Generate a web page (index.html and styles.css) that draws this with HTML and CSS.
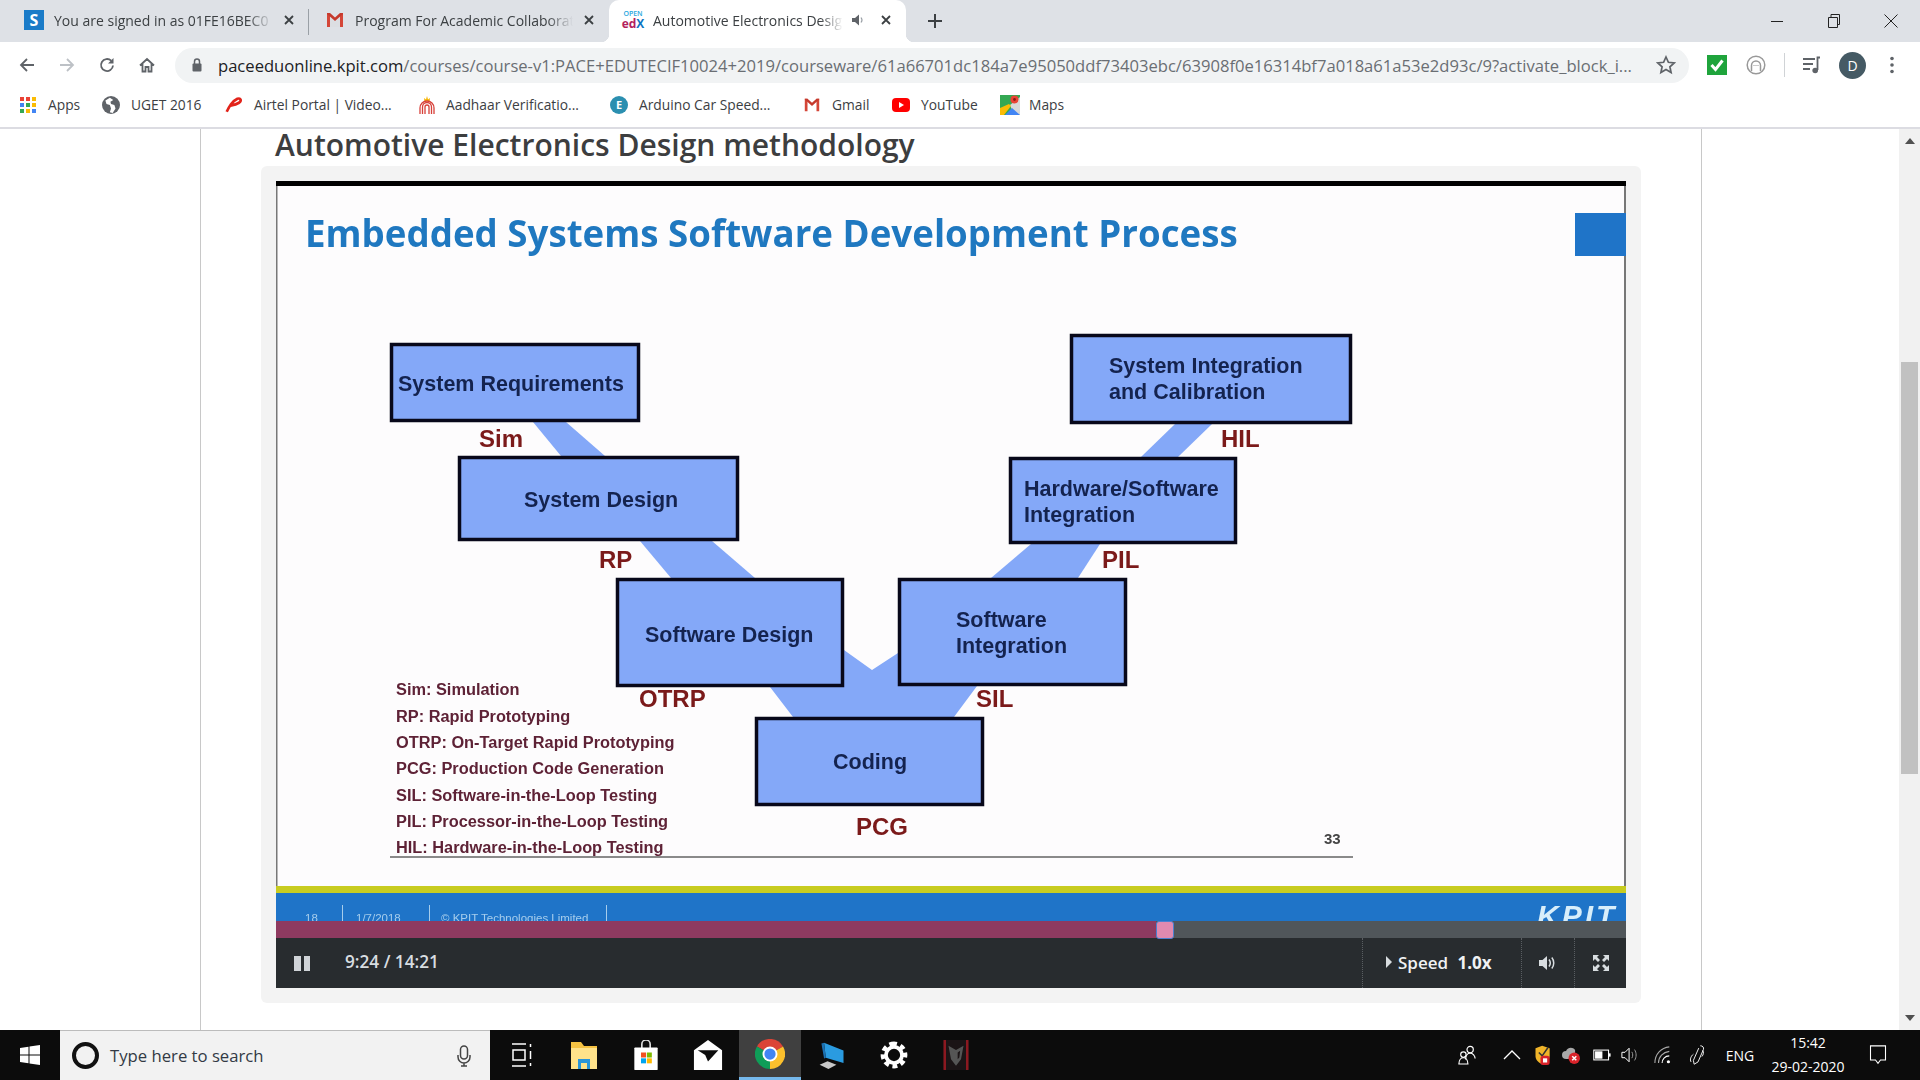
FILE: index.html
```html
<!DOCTYPE html>
<html lang="en">
<head>
  <meta charset="UTF-8">
  <meta name="viewport" content="width=device-width, initial-scale=1.0">
  <title>Automotive Electronics Design methodology</title>
  <link rel="stylesheet" href="styles.css">
</head>
<body>
  <!-- tabs -->
  <div class="tabstrip">
    <div class="tab tab-first">
      <span class="fav fav-s">S</span>
      <span class="tab-title">You are signed in as 01FE16BEC0</span>
      <svg class="tab-x" viewBox="0 0 12 12"><path d="M2 2l8 8M10 2l-8 8"/></svg>
    </div>
    <div class="tab tab-second">
      <svg class="fav" viewBox="0 0 20 20"><path fill="#d9d9d9" d="M3 5l7 6 7-6v12H3z" opacity=".35"/><path fill="#d44638" d="M2 3h3v14H2zM15 3h3v14h-3z"/><path fill="#c5392c" d="M2 3h3l5 4.500 5-4.500h3v1L10 11 2 4z"/></svg>
      <span class="tab-title">Program For Academic Collaboration</span>
      <svg class="tab-x" viewBox="0 0 12 12"><path d="M2 2l8 8M10 2l-8 8"/></svg>
    </div>
    <div class="tab tab-active">
      <span class="fav fav-edx"><span class="edx-open">OPEN</span><span class="edx-name"><span class="edx-ed">ed</span><span class="edx-x">X</span></span></span>
      <span class="tab-title">Automotive Electronics Design methodology</span>
      <svg class="tab-sound" viewBox="0 0 14 14"><path fill="#5f6368" d="M1 5h3l4-3.500v11L4 9H1z"/><path fill="none" stroke="#9aa0a6" stroke-width="1.200" d="M10 4.500c1.200 1.500 1.200 3.500 0 5"/></svg>
      <svg class="tab-x" viewBox="0 0 12 12"><path d="M2 2l8 8M10 2l-8 8"/></svg>
    </div>
    <svg class="tab-new" viewBox="0 0 16 16"><path d="M8 1v14M1 8h14"/></svg>
    <div class="win-btns">
      <svg viewBox="0 0 14 14"><path d="M1 7.500h12"/></svg>
      <svg viewBox="0 0 14 14"><path d="M1.500 3.500h9v10h-9zM4 3.500V.5h8.500v10h-2"/></svg>
      <svg viewBox="0 0 14 14"><path d="M.5.5l13 13M13.500.5l-13 13"/></svg>
    </div>
  </div>

  <!-- address bar -->
  <div class="toolbar">
    <div class="nav-btns">
      <svg viewBox="0 0 18 18"><path class="ic-line" d="M16 9H3M9 3L3 9l6 6"/></svg>
      <svg viewBox="0 0 18 18"><path class="ic-line ic-off" d="M2 9h13M9 3l6 6-6 6"/></svg>
      <svg viewBox="0 0 18 18"><path class="ic-line" d="M15 9.500A6 6 0 1 1 13.200 4.700"/><path fill="#5f6368" d="M15.500 2v5.500H10z"/></svg>
      <svg viewBox="0 0 18 18"><path class="ic-line" d="M2 9.500L9 3l7 6.500M4.500 8v7.500h3V11h3v4.500h3V8"/></svg>
    </div>
    <div class="omnibox">
      <svg class="lock" viewBox="0 0 12 16"><path fill="none" stroke="#5f6368" stroke-width="1.500" d="M3.500 7V4.500a2.500 2.500 0 0 1 5 0V7"/><rect fill="#5f6368" x="1.500" y="6.500" width="9" height="8" rx="1"/></svg>
      <span class="url"><span class="url-host">paceeduonline.kpit.com</span>/courses/course-v1:PACE+EDUTECIF10024+2019/courseware/61a66701dc184a7e95050ddf73403ebc/63908f0e16314bf7a018a61a53e2d93c/9?activate_block_i...</span>
      <svg class="star" viewBox="0 0 20 20"><path fill="none" stroke="#5f6368" stroke-width="1.700" d="M10 2l2.400 5.300 5.800.6-4.300 3.900 1.200 5.700-5.100-2.900-5.100 2.900 1.200-5.700L1.800 7.900l5.800-.6z"/></svg>
    </div>
    <div class="ext-btns">
      <svg class="ext-check" viewBox="0 0 20 20"><rect width="20" height="20" fill="#1fa43c"/><path fill="none" stroke="#fff" stroke-width="3" d="M4.500 10l4 4.500 7-9"/></svg>
      <svg class="ext-ring" viewBox="0 0 20 20"><circle cx="10" cy="10" r="8.800" fill="none" stroke="#999" stroke-width="1.500"/><path fill="none" stroke="#999" stroke-width="1.500" d="M5.500 16v-5.500a4.500 4.500 0 0 1 9 0V16"/><path stroke="#999" stroke-dasharray="1 1" d="M7.500 10.500h5"/></svg>
      <span class="ext-sep"></span>
      <svg class="ext-media" viewBox="0 0 20 20"><path fill="none" stroke="#5f6368" stroke-width="1.800" d="M1 4h12M1 9h10M1 14h7"/><path fill="none" stroke="#5f6368" stroke-width="1.800" d="M15.500 15V2.500H18"/><circle cx="13.200" cy="15.500" r="2.800" fill="#5f6368"/></svg>
      <span class="avatar">D</span>
      <svg class="ext-dots" viewBox="0 0 4 18"><circle cx="2" cy="2.500" r="1.800"/><circle cx="2" cy="9" r="1.800"/><circle cx="2" cy="15.500" r="1.800"/></svg>
    </div>
  </div>

  <!-- bookmarks -->
  <div class="bookmarks">
    <div class="bm bm-apps">
      <svg viewBox="0 0 16 16"><rect width="4" height="4" fill="#ea4335"/><rect x="6" width="4" height="4" fill="#ea4335"/><rect x="12" width="4" height="4" fill="#fbbc05"/><rect y="6" width="4" height="4" fill="#4285f4"/><rect x="6" y="6" width="4" height="4" fill="#34a853"/><rect x="12" y="6" width="4" height="4" fill="#fbbc05"/><rect y="12" width="4" height="4" fill="#34a853"/><rect x="6" y="12" width="4" height="4" fill="#fbbc05"/><rect x="12" y="12" width="4" height="4" fill="#4285f4"/></svg>
      <span>Apps</span>
    </div>
    <div class="bm">
      <svg viewBox="0 0 16 16"><circle cx="8" cy="8" r="8" fill="#5f6368"/><path fill="#fff" d="M7 1.500L3 4l1 3 3 1 1 3-1 3.500 2.500.5L12 11l-1-3-3-1-.5-2L10 3.500z"/></svg>
      <span>UGET 2016</span>
    </div>
    <div class="bm">
      <svg viewBox="0 0 16 16"><path fill="none" stroke="#e2231a" stroke-width="2.400" d="M1.500 14C4 9 6 5 11 2.500c3-1 4 1.500 1.500 3.500-2.500 1.500-5 2-7.500 2.500"/></svg>
      <span>Airtel Portal | Video...</span>
    </div>
    <div class="bm bm-wide">
      <svg viewBox="0 0 20 20"><path fill="#f7b500" d="M10 1l1 3.500L13 3l-.5 3.500L10 6 7.500 6.500 7 3l2 1.500z"/><g fill="none" stroke="#d7413a" stroke-width="1.300"><path d="M8 19V12a2 2 0 0 1 4 0v7"/><path d="M5.500 19v-7a4.500 4.500 0 0 1 9 0v7"/><path d="M3 19v-6a7 7 0 0 1 14 0v6"/></g></svg>
      <span>Aadhaar Verificatio...</span>
    </div>
    <div class="bm">
      <span class="bm-e">E</span>
      <span>Arduino Car Speed...</span>
    </div>
    <div class="bm">
      <svg viewBox="0 0 20 20"><path fill="#d44638" d="M2 3h3v14H2zM15 3h3v14h-3z"/><path fill="#c5392c" d="M2 3h3l5 4.500 5-4.500h3v1L10 11 2 4z"/></svg>
      <span>Gmail</span>
    </div>
    <div class="bm">
      <svg viewBox="0 0 18 18"><rect x="0" y="2" width="18" height="14" rx="4" fill="#f00"/><path fill="#fff" d="M7 6l5 3-5 3z"/></svg>
      <span>YouTube</span>
    </div>
    <div class="bm bm-wide">
      <svg viewBox="0 0 20 20"><rect width="20" height="20" fill="#34a853"/><path fill="#d8d8d8" d="M10 10l10-8v18H14z"/><path fill="#4285f4" d="M5 20l7-7 8 7z"/><path fill="#fbbc05" d="M0 20V13L9 9l2 2-7 9z"/><circle cx="14.500" cy="4.500" r="4" fill="#ea4335"/><circle cx="14.500" cy="4.500" r="1.400" fill="#8a1c14"/></svg>
      <span>Maps</span>
    </div>
  </div>

  <!-- page -->
  <main class="viewport">
    <div class="course">
      <h2 class="unit-title">Automotive Electronics Design methodology</h2>
      <div class="video-card">
        <div class="video-frame">
          <svg class="slide" viewBox="0 0 1350 740">
            <rect class="s-page" width="1350" height="740"/>
            <rect class="s-black" width="1350" height="5"/>
            <rect class="s-edge" x="0" y="5" width="1.500" height="700"/>
            <rect class="s-edge" x="1348" y="5" width="2" height="700"/>
            <text class="s-title" x="29" y="66">Embedded Systems Software Development Process</text>
            <rect class="s-corner" x="1299" y="32" width="51" height="43"/>

            <!-- the V behind the boxes -->
            <polygon class="s-band" points="257,241 290,241 329,275 285,275"/>
            <polygon class="s-band" points="364,360 436,360 479,397 395,397"/>
            <polygon class="s-band" points="395,397 479,397 568,469 596,489 622,472 715,397 802,397 701,505 678,536 517,536 494,506"/>
            <polygon class="s-band" points="755,363 824,363 802,397 715,397"/>
            <polygon class="s-band" points="865,276 902,276 936,243 899,243"/>

            <rect class="s-box" x="115.500" y="163.500" width="247" height="76"/>
            <rect class="s-box" x="183.500" y="276.500" width="278" height="82"/>
            <rect class="s-box" x="341.500" y="398.500" width="225" height="106"/>
            <rect class="s-box" x="623.500" y="398.500" width="226" height="105"/>
            <rect class="s-box" x="480.500" y="537.500" width="226" height="86"/>
            <rect class="s-box" x="795.500" y="154.500" width="279" height="87"/>
            <rect class="s-box" x="734.500" y="277.500" width="225" height="84"/>

            <text class="s-boxtext" x="122" y="210">System Requirements</text>
            <text class="s-boxtext" x="248" y="326">System Design</text>
            <text class="s-boxtext" x="369" y="461">Software Design</text>
            <text class="s-boxtext" x="680" y="446">Software</text>
            <text class="s-boxtext" x="680" y="472">Integration</text>
            <text class="s-boxtext" x="557" y="588">Coding</text>
            <text class="s-boxtext" x="833" y="192">System Integration</text>
            <text class="s-boxtext" x="833" y="218">and Calibration</text>
            <text class="s-boxtext" x="748" y="315">Hardware/Software</text>
            <text class="s-boxtext" x="748" y="341">Integration</text>

            <text class="s-tag" x="203" y="266">Sim</text>
            <text class="s-tag" x="323" y="387">RP</text>
            <text class="s-tag" x="363" y="526">OTRP</text>
            <text class="s-tag" x="580" y="654">PCG</text>
            <text class="s-tag" x="700" y="526">SIL</text>
            <text class="s-tag" x="826" y="387">PIL</text>
            <text class="s-tag" x="945" y="266">HIL</text>

            <text class="s-legend" x="120" y="514">Sim: Simulation</text>
            <text class="s-legend" x="120" y="541">RP: Rapid Prototyping</text>
            <text class="s-legend" x="120" y="567">OTRP: On-Target Rapid Prototyping</text>
            <text class="s-legend" x="120" y="593">PCG: Production Code Generation</text>
            <text class="s-legend" x="120" y="620">SIL: Software-in-the-Loop Testing</text>
            <text class="s-legend" x="120" y="646">PIL: Processor-in-the-Loop Testing</text>
            <text class="s-legend" x="120" y="672">HIL: Hardware-in-the-Loop Testing</text>

            <rect class="s-rule" x="114" y="675" width="963" height="2"/>
            <text class="s-pageno" x="1048" y="663">33</text>

            <rect class="s-yellow" y="705" width="1350" height="7"/>
            <rect class="s-blue" y="712" width="1350" height="28"/>
            <text class="s-foot" x="29" y="741">18</text>
            <rect class="s-footline" x="66" y="724" width="1" height="16"/>
            <text class="s-foot" x="80" y="741">1/7/2018</text>
            <rect class="s-footline" x="153" y="724" width="1" height="16"/>
            <text class="s-foot" x="165" y="741">© KPIT Technologies Limited</text>
            <rect class="s-footline" x="330" y="724" width="1" height="16"/>
            <text class="s-kpit" x="1261" y="745">KPIT</text>
          </svg>
          <div class="progress">
            <div class="progress-done"></div>
            <div class="progress-handle"></div>
          </div>
          <div class="controls">
            <div class="pause"><span></span><span></span></div>
            <div class="vid-time">9:24 / 14:21</div>
            <div class="speed"><i class="speed-arrow"></i>Speed <b>1.0x</b></div>
            <div class="ctl-btn ctl-vol">
              <svg viewBox="0 0 18 16"><path fill="#d8dde0" d="M0 5h3.500L8 1v14l-4.500-4H0z"/><path fill="none" stroke="#d8dde0" stroke-width="1.500" d="M10 4.500c1.500 2 1.500 5 0 7M12.800 2.500c2.600 3.200 2.600 7.800 0 11"/></svg>
            </div>
            <div class="ctl-btn ctl-full">
              <svg viewBox="0 0 16 16"><path fill="#d8dde0" d="M0 0h6L4 2l3 3-2 2-3-3-2 2zM16 0v6l-2-2-3 3-2-2 3-3-2-2zM0 16v-6l2 2 3-3 2 2-3 3 2 2zM16 16h-6l2-2-3-3 2-2 3 3 2-2z"/></svg>
            </div>
          </div>
        </div>
      </div>
    </div>
    <div class="scrollbar">
      <svg class="sb-arrow" viewBox="0 0 10 6"><path d="M5 0l5 6H0z"/></svg>
      <div class="sb-track"><div class="sb-thumb"></div></div>
      <svg class="sb-arrow" viewBox="0 0 10 6"><path d="M0 0h10L5 6z"/></svg>
    </div>
  </main>

  <!-- windows taskbar -->
  <footer class="taskbar">
    <div class="start">
      <svg viewBox="0 0 20 20"><path fill="#fff" d="M0 3l8.500-1.300v7.700H0zM9.500 1.500L20 0v9.400H9.500zM0 10.500h8.500v7.800L0 17zM9.500 10.500H20V20L9.500 18.500z"/></svg>
    </div>
    <div class="search">
      <span class="cortana"></span>
      <span class="search-text">Type here to search</span>
      <svg class="mic" viewBox="0 0 14 22"><rect x="3.500" y="1" width="7" height="13" rx="3.500" fill="none" stroke="#444" stroke-width="1.500"/><path fill="none" stroke="#444" stroke-width="1.500" d="M1 10v2a6 6 0 0 0 12 0v-2M7 18v3M4 21h6"/></svg>
    </div>
    <div class="task task-view">
      <svg viewBox="0 0 20 24"><path fill="none" stroke="#fff" stroke-width="1.500" d="M0 1h14M0 23h14M1 7h12v10H1zM18.500 1v3M18.500 8v8M18.500 20v3"/></svg>
    </div>
    <div class="task">
      <svg viewBox="0 0 28 30"><path fill="#f5c242" d="M1 2h10l3 4h13v22H1z"/><path fill="#ffe28a" d="M1 8h26v21H1z"/><path fill="#2a95d8" d="M8 29V19h12v10h-3v-6h-6v6z"/></svg>
    </div>
    <div class="task">
      <svg viewBox="0 0 28 36"><path fill="none" stroke="#ddd" stroke-width="2" d="M9 10V5a5 5 0 0 1 10 0v5"/><rect y="9" width="28" height="27" rx="1" fill="#fff"/><rect x="8" y="15" width="6" height="6" fill="#f25022"/><rect x="15" y="15" width="6" height="6" fill="#7fba00"/><rect x="8" y="22" width="6" height="6" fill="#00a4ef"/><rect x="15" y="22" width="6" height="6" fill="#ffb900"/></svg>
    </div>
    <div class="task">
      <svg viewBox="0 0 30 32"><path fill="#fff" d="M0 11L15 0l15 11v21H0z"/><path fill="#0c0c0c" d="M4 11h22L15 23l-3-7z"/></svg>
    </div>
    <div class="task task-on">
      <svg viewBox="0 0 32 32"><path fill="#db4437" d="M16 16L2.100 8A16 16 0 0 1 29.900 8z"/><path fill="#fbc02d" d="M16 16L29.900 8A16 16 0 0 1 16 32z"/><path fill="#0f9d58" d="M16 16V32A16 16 0 0 1 2.100 8z"/><circle cx="16" cy="16" r="8" fill="#fff"/><circle cx="16" cy="16" r="6" fill="#4285f4"/></svg>
    </div>
    <div class="task">
      <svg viewBox="0 0 30 34"><path fill="#2a9be0" d="M6 3l22 9v14L8 20z"/><path fill="#1b6fb0" d="M6 3l2 17-2 1-3-17z"/><path fill="#c8c8c8" d="M1 28l9-4 10 4-9 5z"/></svg>
    </div>
    <div class="task">
      <svg viewBox="0 0 28 28"><path fill="none" stroke="#fff" stroke-width="4" stroke-dasharray="4.400 3.400" d="M14 3.500a10.500 10.500 0 1 0 .01 0z"/><circle cx="14" cy="14" r="7.500" fill="none" stroke="#fff" stroke-width="3.500"/></svg>
    </div>
    <div class="task">
      <svg viewBox="0 0 30 36"><rect width="30" height="36" rx="2" fill="#1b1416"/><path fill="#8c1820" d="M0 0h3v36H0zM27 0h3v36h-3z"/><path fill="#555" d="M6 7l9 5 9-5-3 16-6 8-6-8zM10 13l3 2v8l-2-2zM20 13l-3 2v8l2-2z"/></svg>
    </div>
    <div class="tray">
      <svg class="tray-ic" viewBox="0 0 20 22"><g fill="none" stroke="#fff" stroke-width="1.300"><circle cx="13.500" cy="5" r="3.500"/><path d="M8.500 16c0-4 2-7 5-7s5.500 3 5.500 6"/><circle cx="6" cy="10.500" r="3"/><path d="M1 21c0-4 2-7 5-7s5 3 5 7z"/></g></svg>
      <svg class="tray-ic" viewBox="0 0 18 10"><path fill="none" stroke="#fff" stroke-width="1.300" d="M1 9l8-8 8 8"/></svg>
      <svg class="tray-ic" viewBox="0 0 18 24"><path fill="#f0b429" d="M8 1l9 3v9c0 5-4 8-9 10C3 21 0 18 0 13V4z"/><path fill="none" stroke="#333" stroke-width="1.800" d="M4 9l4 4 7-10"/><rect x="6" y="13" width="11" height="11" rx="3" fill="#d9232a"/><rect x="9" y="16" width="5" height="5" fill="#fff"/></svg>
      <svg class="tray-ic" viewBox="0 0 22 24"><path fill="#a8a8a8" d="M5 17a5 5 0 0 1 0-10c1-4 8-6 11-1v11z"/><circle cx="15" cy="16" r="7" fill="#d9232a"/><path stroke="#fff" stroke-width="1.800" d="M12.500 13.500l5 5M17.500 13.500l-5 5"/></svg>
      <svg class="tray-ic" viewBox="0 0 22 16"><rect x="1" y="2" width="18" height="12" fill="none" stroke="#fff" stroke-width="1.300"/><rect x="2.500" y="3.500" width="9" height="9" fill="#fff"/><rect x="19.500" y="6" width="2" height="4" fill="#fff"/></svg>
      <svg class="tray-ic" viewBox="0 0 20 20"><path fill="none" stroke="#fff" stroke-width="1.100" d="M1 7h3.500L9 2.500v15L4.500 13H1z"/><path fill="none" stroke="#999" stroke-width="1.100" d="M12 6.500c1.400 2 1.400 5 0 7M15 4c2.400 3.500 2.400 8.500 0 12"/></svg>
      <svg class="tray-ic" viewBox="0 0 20 20"><g fill="none" stroke="#aaa" stroke-width="1.200"><path d="M1 19C1 9 8 2 17 1"/><path d="M5 19c0-7 5-12 12-13"/></g><path fill="none" stroke="#fff" stroke-width="1.200" d="M9 19c0-4 3-8 8-8"/><circle cx="16" cy="17.500" r="1.800" fill="#fff"/></svg>
      <svg class="tray-ic" viewBox="0 0 22 26"><path fill="none" stroke="#fff" stroke-width="1.200" d="M14 1c3 0 5 2 4 5L11 22l-5 3-1-5 7-16M2 22c-2-3 0-8 3-10M17 7c2 2 1 6-1 8"/></svg>
      <div class="tray-lang">ENG</div>
      <div class="tray-clock"><span>15:42</span><span>29-02-2020</span></div>
      <svg class="tray-ic" viewBox="0 0 20 24"><path fill="none" stroke="#fff" stroke-width="1.300" d="M1 1h18v17h-6l-3 4-3-4H1z"/></svg>
    </div>
  </footer>
</body>
</html>
```

FILE: styles.css
```css
* {
    box-sizing: border-box;
}
html, body {
    margin: 0;
    padding: 0;
    height: 100%;
}
body {
    display: flex;
    flex-direction: column;
    height: 100vh;
    overflow: hidden;
    font-family: "Open Sans", "Liberation Sans", sans-serif;
    background: #fff;
    color: #3c4043;
}

/* ---- tabs ---- */
.tabstrip {
    display: flex;
    align-items: center;
    height: 42px;
    padding-left: 8px;
    background: #dee1e6;
}
.tab {
    position: relative;
    display: flex;
    align-items: center;
    height: 42px;
    padding: 0 14px 2px 16px;
    font-size: 14px;
}
.tab-first {
    width: 301px;
}
.tab-first::after {
    content: "";
    position: absolute;
    right: 0;
    top: 9px;
    height: 26px;
    width: 1px;
    background: #9aa0a6;
}
.tab-second {
    width: 300px;
}
.tab-active {
    width: 297px;
    padding-left: 14px;
    background: #fff;
    border-radius: 10px 10px 0 0;
}
.tab-active::before,
.tab-active::after {
    content: "";
    position: absolute;
    bottom: 0;
    width: 8px;
    height: 8px;
}
.tab-active::before {
    left: -8px;
    background: radial-gradient(circle at 0 0, #dee1e6 8px, #fff 8.500px);
}
.tab-active::after {
    right: -8px;
    background: radial-gradient(circle at 100% 0, #dee1e6 8px, #fff 8.500px);
}
.fav {
    flex: none;
    width: 20px;
    height: 20px;
    margin-right: 10px;
}
.fav-s {
    background: #1a7bc8;
    color: #fff;
    font-size: 16px;
    font-weight: 700;
    line-height: 20px;
    text-align: center;
}
.fav-edx {
    display: flex;
    flex-direction: column;
    align-items: center;
}
.edx-open {
    font-size: 7px;
    line-height: 8px;
    color: #2aa8e0;
    font-weight: 600;
}
.edx-name {
    font-size: 12px;
    font-weight: 700;
    line-height: 12px;
}
.edx-ed {
    color: #b3225c;
}
.edx-x {
    color: #0a75c2;
}
.tab-title {
    flex: 1;
    min-width: 0;
    white-space: nowrap;
    overflow: hidden;
    -webkit-mask-image: linear-gradient(to right, #000 88%, transparent);
    mask-image: linear-gradient(to right, #000 88%, transparent);
}
.tab-sound {
    flex: none;
    width: 14px;
    height: 14px;
    margin: 0 15px 0 8px;
}
.tab-x {
    flex: none;
    width: 12px;
    height: 12px;
    margin-left: 10px;
    fill: none;
    stroke: #3c4043;
    stroke-width: 1.800;
}
.tab-sound + .tab-x {
    margin-left: 0;
}
.tab-new {
    width: 16px;
    height: 16px;
    margin-left: 21px;
    fill: none;
    stroke: #3c4043;
    stroke-width: 2;
}
.win-btns {
    display: flex;
    margin-left: auto;
    gap: 43px;
    padding-right: 22px;
}
.win-btns svg {
    width: 14px;
    height: 14px;
    fill: none;
    stroke: #222;
    stroke-width: 1;
}

/* ---- address bar ---- */
.toolbar {
    display: flex;
    align-items: center;
    height: 42px;
    padding-top: 4px;
    background: #fff;
}
.nav-btns {
    display: flex;
    width: 175px;
    padding-left: 18px;
    gap: 22px;
}
.nav-btns svg {
    width: 18px;
    height: 18px;
}
.ic-line {
    fill: none;
    stroke: #5f6368;
    stroke-width: 1.800;
}
.ic-off {
    stroke: #bdc1c6;
}
.omnibox {
    display: flex;
    align-items: center;
    width: 1514px;
    height: 35px;
    padding: 0 13px 0 16px;
    border-radius: 18px;
    background: #f1f3f4;
}
.lock {
    flex: none;
    width: 12px;
    height: 16px;
    margin-right: 15px;
}
.url {
    flex: 1;
    min-width: 0;
    white-space: nowrap;
    overflow: hidden;
    font-size: 16.600px;
    color: #6a6e73;
}
.url-host {
    color: #202124;
}
.star {
    flex: none;
    width: 20px;
    height: 20px;
    margin-left: 20px;
}
.ext-btns {
    display: flex;
    align-items: center;
    flex: 1;
    padding-left: 18px;
}
.ext-check {
    width: 20px;
    height: 20px;
}
.ext-ring {
    width: 20px;
    height: 20px;
    margin-left: 19px;
}
.ext-sep {
    width: 1px;
    height: 24px;
    margin-left: 18px;
    background: #d0d3d6;
}
.ext-media {
    width: 20px;
    height: 20px;
    margin-left: 17px;
}
.avatar {
    width: 27px;
    height: 27px;
    margin-left: 17px;
    border-radius: 50%;
    background: #455a64;
    color: #fff;
    font-size: 14px;
    line-height: 27px;
    text-align: center;
}
.ext-dots {
    width: 4px;
    height: 18px;
    margin-left: 24px;
    fill: #5f6368;
}

/* ---- bookmarks ---- */
.bookmarks {
    display: grid;
    grid-template-columns: 82px 123px 192px 193px 193px 89px 108px auto;
    align-items: center;
    height: 45px;
    padding: 0 0 2px 20px;
    border-bottom: 2px solid #dcdce2;
    font-size: 13.800px;
    color: #3c4043;
}
.bm {
    display: flex;
    align-items: center;
    gap: 11px;
    white-space: nowrap;
}
.bm svg {
    flex: none;
    width: 18px;
    height: 18px;
}
.bm-apps {
    gap: 12px;
}
.bm-apps svg {
    width: 16px;
    height: 16px;
}
.bm-wide {
    gap: 9px;
}
.bm-wide svg {
    width: 20px;
    height: 20px;
}
.bm-e {
    flex: none;
    width: 18px;
    height: 18px;
    border-radius: 50%;
    background: #2b8fb0;
    color: #fff;
    font-size: 11px;
    font-weight: 700;
    line-height: 18px;
    text-align: center;
}

/* ---- page ---- */
.viewport {
    display: flex;
    flex: 1;
    min-height: 0;
    background: #fff;
}
.course {
    width: 1502px;
    margin-left: 200px;
    padding-left: 60px;
    border-left: 1px solid #c8c8c8;
    border-right: 1px solid #c8c8c8;
}
.unit-title {
    height: 37px;
    margin: 0;
    padding-left: 14px;
    font-size: 30px;
    font-weight: 600;
    line-height: 31px;
    color: #3d3e3f;
    white-space: nowrap;
}
.video-card {
    width: 1380px;
    height: 837px;
    padding: 15px;
    border-radius: 6px;
    background: #f3f3f3;
}
.video-frame {
    width: 1350px;
}
.slide {
    display: block;
    width: 1350px;
    height: 740px;
    filter: blur(0.7px);
}
.s-page {
    fill: #fdfcfd;
}
.s-black {
    fill: #000;
}
.s-edge {
    fill: #777;
}
.s-title {
    font-family: "Open Sans", sans-serif;
    font-size: 36.700px;
    font-weight: 700;
    fill: #1f78c0;
}
.s-corner {
    fill: #1f74c8;
}
.s-band {
    fill: #84a8f8;
}
.s-box {
    fill: #84a8f8;
    stroke: #08081a;
    stroke-width: 3.500;
}
.s-boxtext {
    font-family: "Liberation Sans", Arial, sans-serif;
    font-size: 21.500px;
    font-weight: 700;
    fill: #14234f;
}
.s-tag {
    font-family: "Liberation Sans", Arial, sans-serif;
    font-size: 24px;
    font-weight: 700;
    fill: #7b1a1a;
}
.s-legend {
    font-family: "Liberation Sans", Arial, sans-serif;
    font-size: 16.350px;
    font-weight: 700;
    fill: #5e2236;
}
.s-rule {
    fill: #8a8a8a;
}
.s-pageno {
    font-family: "Liberation Sans", Arial, sans-serif;
    font-size: 15px;
    font-weight: 700;
    fill: #444;
}
.s-yellow {
    fill: #c8cc20;
}
.s-blue {
    fill: #1f74c8;
}
.s-foot {
    font-family: "Liberation Sans", Arial, sans-serif;
    font-size: 11.500px;
    fill: #a6cdec;
}
.s-footline {
    fill: #a6cdec;
}
.s-kpit {
    font-family: "Liberation Sans", Arial, sans-serif;
    font-size: 30px;
    font-weight: 700;
    font-style: italic;
    letter-spacing: 3px;
    fill: #d8eefa;
}

/* ---- video controls ---- */
.progress {
    position: relative;
    height: 17px;
    background: #50565a;
}
.progress-done {
    width: 880px;
    height: 100%;
    background: #8e3a60;
}
.progress-handle {
    position: absolute;
    left: 880px;
    top: 0;
    width: 18px;
    height: 18px;
    border: 1px solid #4a80d0;
    border-radius: 3px;
    background: #e08ab0;
}
.controls {
    display: flex;
    align-items: center;
    height: 50px;
    background: #282c2f;
    color: #d8dde0;
}
.pause {
    display: flex;
    gap: 3px;
    margin-left: 18px;
}
.pause span {
    width: 6.500px;
    height: 15px;
    background: #d0d4d8;
}
.vid-time {
    margin-left: 35px;
    padding-bottom: 4px;
    font-size: 17.200px;
    font-weight: 600;
}
.speed {
    display: flex;
    align-items: center;
    align-self: stretch;
    width: 159px;
    margin-left: auto;
    padding: 0 0 2px 23px;
    border-left: 1px dotted #5a5e62;
    font-size: 17px;
    font-weight: 600;
    color: #f0f2f4;
    white-space: pre;
}
.speed b {
    margin-left: 5px;
    font-weight: 700;
}
.speed-arrow {
    width: 0;
    height: 0;
    margin-right: 6px;
    border-left: 6px solid #d8dde0;
    border-top: 6px solid transparent;
    border-bottom: 6px solid transparent;
}
.ctl-btn {
    display: flex;
    align-items: center;
    justify-content: center;
    align-self: stretch;
    border-left: 1px dotted #5a5e62;
}
.ctl-vol {
    width: 53px;
}
.ctl-vol svg {
    width: 18px;
    height: 16px;
}
.ctl-full {
    width: 52px;
}
.ctl-full svg {
    width: 16px;
    height: 16px;
}

/* ---- page scrollbar ---- */
.scrollbar {
    display: flex;
    flex-direction: column;
    align-items: center;
    width: 21px;
    margin-left: auto;
    background: #f1f1f1;
}
.sb-arrow {
    flex: none;
    width: 10px;
    height: 6px;
    margin: 9px 0;
    fill: #505050;
}
.sb-track {
    flex: 1;
    align-self: stretch;
    padding: 209px 2px 0;
}
.sb-thumb {
    height: 412px;
    background: #c1c1c1;
}

/* ---- taskbar ---- */
.taskbar {
    display: flex;
    height: 50px;
    background: #0c0c0c;
}
.start {
    display: flex;
    align-items: center;
    justify-content: center;
    width: 60px;
}
.start svg {
    width: 20px;
    height: 20px;
}
.search {
    display: flex;
    align-items: center;
    width: 430px;
    padding-left: 12px;
    border-top: 1px solid #bcbcbc;
    background: #f2f2f2;
}
.cortana {
    flex: none;
    width: 27px;
    height: 27px;
    border: 4px solid #111;
    border-radius: 50%;
    background: #f2f2f2;
}
.search-text {
    margin-left: 11px;
    font-size: 16.700px;
    color: #333a45;
}
.mic {
    width: 14px;
    height: 22px;
    margin-left: auto;
    margin-right: 19px;
}
.task {
    display: flex;
    align-items: center;
    justify-content: center;
    width: 62px;
}
.task-view {
    width: 63px;
}
.task svg {
    height: 30px;
    width: 30px;
}
.task-view svg {
    height: 24px;
    width: 20px;
}
.task-on {
    background: #404040;
    border-bottom: 3px solid #76b9ed;
}
.tray {
    display: grid;
    grid-template-columns: 44px 46px 16px 40px 22px 34px 32px 38px 46px 90px 50px;
    align-items: center;
    justify-items: center;
    margin-left: auto;
    padding-right: 17px;
    color: #fff;
}
.tray-ic {
    width: 18px;
    height: 20px;
}
.tray-lang {
    font-size: 14px;
}
.tray-clock {
    display: flex;
    flex-direction: column;
    align-items: center;
    gap: 4px;
    font-size: 14px;
    line-height: 20px;
}
```
